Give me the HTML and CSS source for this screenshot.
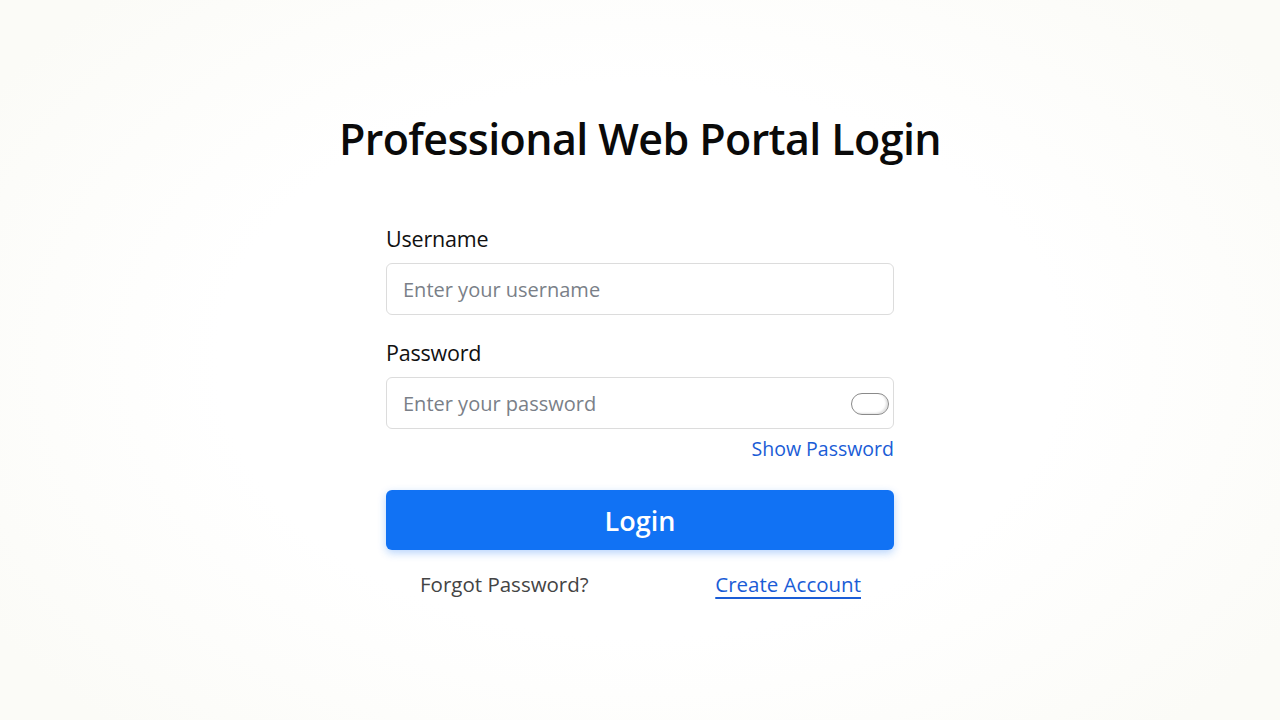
FILE: index.html
```html
<!DOCTYPE html>
<html lang="en">
<head>
<meta charset="utf-8">
<title>Professional Web Portal Login</title>
<link rel="stylesheet" href="styles.css">
</head>
<body>
<main class="page">
  <h1 class="title">Professional Web Portal Login</h1>
  <form class="form">
    <label class="label" for="username">Username</label>
    <div class="field">
      <input class="input" id="username" type="text" placeholder="Enter your username">
    </div>
    <label class="label label-pw" for="password">Password</label>
    <div class="field">
      <input class="input" id="password" type="password" placeholder="Enter your password">
      <span class="toggle"></span>
    </div>
    <div class="show-row"><a class="show-link" href="#">Show Password</a></div>
    <button class="btn" type="button">Login</button>
    <div class="links">
      <a class="forgot" href="#">Forgot Password?</a>
      <a class="create" href="#">Create Account</a>
    </div>
  </form>
</main>
</body>
</html>
```
FILE: styles.css
```css
* { box-sizing: border-box; }
html, body { margin: 0; height: 100%; }
body {
  background: radial-gradient(ellipse 60% 70% at 50% 50%, #ffffff 55%, #fbfbf7 100%);
  background-color: #fbfbf7;
  font-family: "Open Sans", "Noto Sans", sans-serif;
  color: #111;
}
.page {
  height: 720px;
  display: flex;
  flex-direction: column;
  align-items: center;
  padding-top: 109px;
}
.title {
  margin: 0;
  font-size: 43px;
  font-weight: 600;
  letter-spacing: -0.6px;
  line-height: 60px;
  color: #0a0a0a;
}
.form {
  width: 508px;
  margin-top: 56px;
  display: flex;
  flex-direction: column;
}
.label {
  font-size: 21.5px;
  font-weight: 500;
  line-height: 28px;
  color: #111;
  margin-bottom: 10px;
  letter-spacing: -0.2px;
}
.label-pw { margin-top: 24px; }
.field {
  position: relative;
  height: 52px;
  border: 1px solid #dcdcdc;
  border-radius: 6px;
  background: #fff;
}
.input {
  width: 100%;
  height: 100%;
  border: none;
  outline: none;
  background: transparent;
  padding: 0 16px;
  font-family: "Open Sans", sans-serif;
  font-size: 20px;
  color: #333;
}
.input::placeholder { color: #7a7f88; }
.toggle {
  position: absolute;
  right: 4px;
  top: 15px;
  width: 38px;
  height: 22px;
  border: 1.5px solid #8a8a8a;
  border-radius: 11px;
  background: #fff;
  box-shadow: inset -2px -1px 2px rgba(0,0,0,0.12);
}
.show-row {
  display: flex;
  justify-content: flex-end;
  margin-top: 7px;
}
.show-link {
  font-size: 19.5px;
  color: #1a5cd6;
  text-decoration: none;
  line-height: 26px;
}
.btn {
  margin-top: 28px;
  height: 60px;
  border: none;
  border-radius: 6px;
  background: #1172f4;
  color: #fff;
  font-family: "Open Sans", sans-serif;
  font-size: 27px;
  font-weight: 600;
  box-shadow: 0 3px 8px rgba(17,114,244,0.3);
}
.links {
  display: flex;
  justify-content: space-between;
  padding: 0 33px 0 34px;
  margin-top: 20px;
}
.forgot {
  font-size: 20.5px;
  color: #444;
  text-decoration: none;
}
.create {
  font-size: 20.5px;
  color: #1a5cd6;
  text-decoration: underline;
  text-underline-offset: 5px;
}
```
